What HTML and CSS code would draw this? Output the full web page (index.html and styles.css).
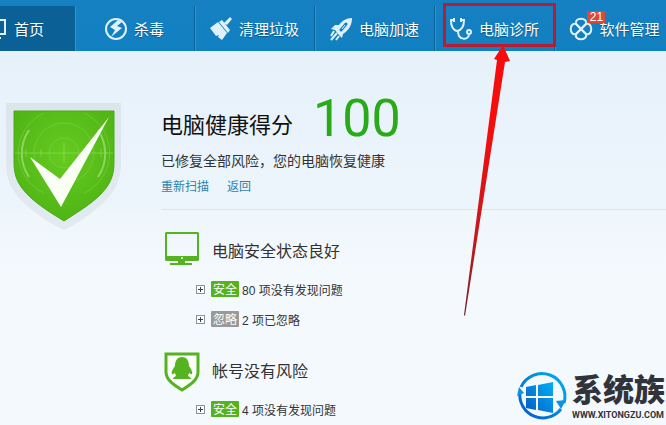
FILE: index.html
```
<!DOCTYPE html>
<html lang="zh-CN">
<head>
  <meta charset="UTF-8" />
  <meta name="viewport" content="width=device-width, initial-scale=1.0"/>
  <title>电脑健康得分</title>
  <link rel="stylesheet" href="styles.css">
</head>
<body>

  <nav class="nav">
    <a href="#home" class="tab active">
      <svg class="tab-icon" viewBox="0 0 22 22"><path d="M1 2h19v14H1zM6 20h10" fill="none" stroke="#dff1fc" stroke-width="2"/></svg>
      <span>首页</span>
    </a>
    <a href="#virus" class="tab">
      <svg class="tab-icon" viewBox="0 0 22 22"><circle cx="11" cy="11" r="10" fill="none" stroke="#dff1fc" stroke-width="2"/><path d="M13 2L5 9l5 3-4 7 11-9-5-2 5-4z" fill="#dff1fc"/></svg>
      <span>杀毒</span>
    </a>
    <a href="#clean" class="tab">
      <svg class="tab-icon" viewBox="0 0 22 22"><path d="M0 10l8-6 9 11-5 7-4-3 1-2-3 1zM9 4l3-2 8 10-2 3zM14 5l6-6 2 2-5 6z" fill="#dff1fc"/></svg>
      <span>清理垃圾</span>
    </a>
    <a href="#speed" class="tab">
      <svg class="tab-icon" viewBox="0 0 22 22"><path d="M22 0c0 7-3 12-9 16l-1 4-3-3-4-5-4-1 4-4h4C12 3 16 0 22 0z" fill="#dff1fc"/><path d="M11 12l5-6" stroke="#1680c1" stroke-width="3" stroke-linecap="round"/><path d="M12 11l3-4" stroke="#dff1fc"/><path d="M4 13l-3 5M7 15l-6 7M9 18l-3 4" stroke="#dff1fc" stroke-width="2"/></svg>
      <span>电脑加速</span>
    </a>
    <a href="#clinic" class="tab">
      <svg class="tab-icon" viewBox="0 0 22 22"><path d="M4 2H1c0 6 2 10 6 11 5-1 7-5 7-11h-3M8 13c0 10 10 9 11 4" fill="none" stroke="#dff1fc" stroke-width="2"/><path d="M4 0v4M11 0v4" stroke="#dff1fc" stroke-width="2"/><circle cx="19" cy="14" r="2" fill="#1680c1" stroke="#dff1fc" stroke-width="2"/></svg>
      <span>电脑诊所</span>
    </a>
    <a href="#software" class="tab">
      <span class="icon-wrap">
        <svg class="tab-icon" viewBox="0 0 22 22"><g fill="none" stroke="#dff1fc" stroke-width="2"><path d="M11 11L6 6c-2-7 12-7 10 0z"/><path d="M11 11l5 5c2 7-12 7-10 0z"/><path d="M11 11l-5 5c-7 2-7-12 0-10z"/><path d="M11 11l5-5c7-2 7 12 0 10z"/></g></svg>
        <span class="count">21</span>
      </span>
      <span>软件管理</span>
    </a>
  </nav>

  <main class="main">
    <svg class="shield" viewBox="0 0 115 127">
      <defs>
        <linearGradient id="rim" x1="0" y1="0" x2="0" y2="1"><stop offset="0" stop-color="#dce5eb"/><stop offset="1" stop-color="#e3ebf2"/></linearGradient>
        <radialGradient id="green" cx=".5" cy=".4" r=".65"><stop offset="0" stop-color="#65cb20"/><stop offset="1" stop-color="#4eb314"/></radialGradient>
      </defs>
      <path d="M0 0h115v60c0 16-5 27-15 37-12 12-28 24-42 30-14-6-31-18-43-30C5 87 0 76 0 60z" fill="url(#rim)"/>
      <path d="M8 8h100v52c0 14-5 23-14 32-10 10-24 18-36 26-13-8-26-16-36-26C13 83 8 74 8 60z" fill="url(#green)" stroke="#4baa17"/>
      <g fill="none" stroke="#a2e56f" opacity=".5">
        <circle cx="58" cy="50" r="15" opacity=".6"/><circle cx="58" cy="50" r="30" opacity=".6"/>
        <path d="M38 10a44 44 0 0 0 0 80M78 10a44 44 0 0 1 0 80" opacity=".6"/>
        <path d="M9 50h98M58 40v20M20 46v8M35 46v8M80 46v8M95 46v8"/>
        <path d="M23 27a42 42 0 0 0 0 47M92 27a42 42 0 0 1 0 47" stroke="#c5f0a4" stroke-width="2"/>
      </g>
      <path d="M24 54l30 22 49-62-48 90z" fill="#fafff5"/>
    </svg>

    <div class="content">
      <header class="summary">
        <div class="score-line">
          <h1>电脑健康得分</h1>
          <strong class="score">100</strong>
        </div>
        <p>已修复全部风险，您的电脑恢复健康</p>
        <div class="links">
          <a href="#rescan">重新扫描</a>
          <a href="#back">返回</a>
        </div>
      </header>

      <section class="group">
        <svg class="group-icon" viewBox="0 0 36 40"><path d="M2 0h32l1 1v27l-1 1H21v2h7v2H6v-2h8v-2H2l-1-1V1zM3 2v22h30V2z" fill="#54b31f" fill-rule="evenodd"/><circle cx="18" cy="26" r="1" fill="#fff"/></svg>
        <h2>电脑安全状态良好</h2>
        <ul>
          <li><button class="expand" aria-label="展开"></button><span class="tag">安全</span>80 项没有发现问题</li>
          <li><button class="expand" aria-label="展开"></button><span class="tag ignored">忽略</span>2 项已忽略</li>
        </ul>
      </section>

      <section class="group">
        <svg class="group-icon" viewBox="0 0 36 40"><path d="M2 2h32v18c0 8-8 13-16 18C10 33 2 28 2 20z" fill="#fbfefa" stroke="#54b31f" stroke-width="3"/><path d="M18 5c-5 0-7 4-7 9-2 3-4 6-3 8 1 1 2-1 3-1l1 3c-1 1-3 1-3 3h18c0-2-2-2-3-3l1-3c1 0 2 2 3 1 1-2-1-5-3-8 0-5-2-9-7-9z" fill="#54b31f"/></svg>
        <h2>帐号没有风险</h2>
        <ul>
          <li><button class="expand" aria-label="展开"></button><span class="tag">安全</span>4 项没有发现问题</li>
        </ul>
      </section>
    </div>
  </main>

  <!-- callout over the clinic tab -->
  <div class="highlight"></div>
  <svg class="arrow" viewBox="0 0 50 274">
    <defs><linearGradient id="shaft" x1="0" y1="0" x2="0" y2="1"><stop offset=".3" stop-color="#f50d0d"/><stop offset=".7" stop-color="#c5191b"/><stop offset="1" stop-color="#70262b"/></linearGradient></defs>
    <path d="M43 2l7 16-5 1L5 273l-1-1L37 17l-3-1z" fill="url(#shaft)"/>
  </svg>

  <div class="brand">
    <svg class="brand-icon" viewBox="0 0 50 52">
      <defs><linearGradient id="blue" x1="1" y1="0" x2="0" y2="1"><stop offset="0" stop-color="#00b1f4"/><stop offset="1" stop-color="#0758c8"/></linearGradient></defs>
      <path d="M4 16A23 23 0 0 1 47 32M44 38A23 23 0 0 1 3 21" fill="none" stroke="url(#blue)" stroke-width="3"/>
      <path d="M39 30l5 8 5-9zM0 25l2-9 5 6z" fill="#0894e5"/>
      <path d="M9 16l10-2v11H9zM21 14l15-3v14H21zM9 27h10v12L9 37zM21 27h15v15l-15-3z" fill="url(#blue)"/>
    </svg>
    <div class="brand-text">
      <b>系统族</b>
      <small>WWW.XITONGZU.COM</small>
    </div>
  </div>

</body>
</html>
```
FILE: styles.css
```
body {
  margin: 0;
  min-height: 100vh;
  overflow: hidden;
  position: relative;
  font-family: "Liberation Sans", "Noto Sans CJK SC", sans-serif;
  font-size: 12px;
  color: #333;
  background: linear-gradient(#e6f1fa 50px, #edf5fc 208px, #eff7fb 210px, #f4f9fe 280px);
}
h1, h2, p, ul {
  margin: 0;
  padding: 0;
  font-weight: normal;
}
a {
  text-decoration: none;
}
svg {
  display: block;
  overflow: visible;
}

.nav {
  display: flex;
  height: 45px;
  padding-top: 6px;
  margin-left: -45px;
  background: linear-gradient(#1680c2, #1180c1);
}
.tab {
  display: flex;
  flex: none;
  align-items: center;
  justify-content: center;
  gap: 7px;
  box-sizing: border-box;
  width: 120px;
  border-right: 1px solid #096199;
  box-shadow: 1px 0 #3295cf;
  color: #fff;
  font-size: 15px;
  text-shadow: 0 1px 1px #0a5482;
}
.tab.active {
  background: #0b6196;
}
.tab:last-child {
  border: none;
  box-shadow: none;
}
.tab-icon {
  width: 22px;
  height: 22px;
}
.icon-wrap {
  position: relative;
}
.count {
  position: absolute;
  top: -7px;
  left: 17px;
  width: 18px;
  background: #d94a38;
  font-size: 12px;
  line-height: 12px;
  text-align: center;
  text-shadow: none;
}

.main {
  display: flex;
  gap: 40px;
  padding-left: 6px;
}
.shield {
  flex: none;
  width: 115px;
  height: 127px;
  margin-top: 52px;
}
.content {
  flex: 1;
  padding-top: 40px;
}
.summary {
  padding-bottom: 10px;
  margin-bottom: 4px;
  border-bottom: 1px solid #dce4ef;
}
.score-line {
  display: flex;
  align-items: center;
  gap: 20px;
  height: 56px;
}
h1 {
  padding-top: 14px;
  font-size: 22px;
  line-height: 32px;
  color: #111;
}
.score {
  font-family: Roboto, sans-serif;
  font-size: 52px;
  font-weight: normal;
  line-height: 52px;
  color: #2aaa18;
}
.summary p {
  font-size: 14px;
  line-height: 28px;
}
.links {
  display: flex;
  gap: 18px;
  line-height: 24px;
}
.links a {
  color: #2b83ad;
}

.group {
  display: grid;
  grid-template-columns: 36px 1fr;
  column-gap: 12px;
  align-items: center;
  padding: 18px 0 0 3px;
}
.group-icon {
  width: 36px;
  height: 40px;
}
h2 {
  font-size: 16px;
  line-height: 36px;
}
.group ul {
  grid-column: 1 / 3;
  padding: 2px 0 0 32px;
  list-style: none;
}
.group li {
  display: flex;
  align-items: center;
  height: 30px;
}
.expand {
  width: 9px;
  height: 9px;
  padding: 0;
  border: 1px solid #8a929b;
  background: linear-gradient(#345, #345) center / 5px 1px no-repeat, linear-gradient(#345, #345) center / 1px 5px no-repeat, #fff;
}
.tag {
  width: 28px;
  padding-top: 2px;
  margin: 0 3px 0 6px;
  border-radius: 1px;
  background: #54b31f;
  color: #fff;
  line-height: 14px;
  text-align: center;
}
.tag.ignored {
  background: #999;
}

.highlight {
  position: absolute;
  top: 3px;
  left: 443px;
  box-sizing: border-box;
  width: 113px;
  height: 44px;
  border: 3px solid #b71d32;
}
.arrow {
  position: absolute;
  top: 43px;
  left: 460px;
  width: 50px;
  height: 274px;
}

.brand {
  position: absolute;
  right: 0;
  bottom: 2px;
  display: flex;
  align-items: center;
  gap: 5px;
}
.brand-icon {
  width: 50px;
  height: 52px;
}
.brand-text {
  width: 94px;
  color: #30343a;
  white-space: nowrap;
}
.brand b {
  display: block;
  font-size: 31px;
  font-weight: 900;
  line-height: 36px;
}
.brand small {
  display: block;
  font-family: Roboto, sans-serif;
  font-size: 9px;
  font-weight: bold;
  line-height: 12px;
}
```
